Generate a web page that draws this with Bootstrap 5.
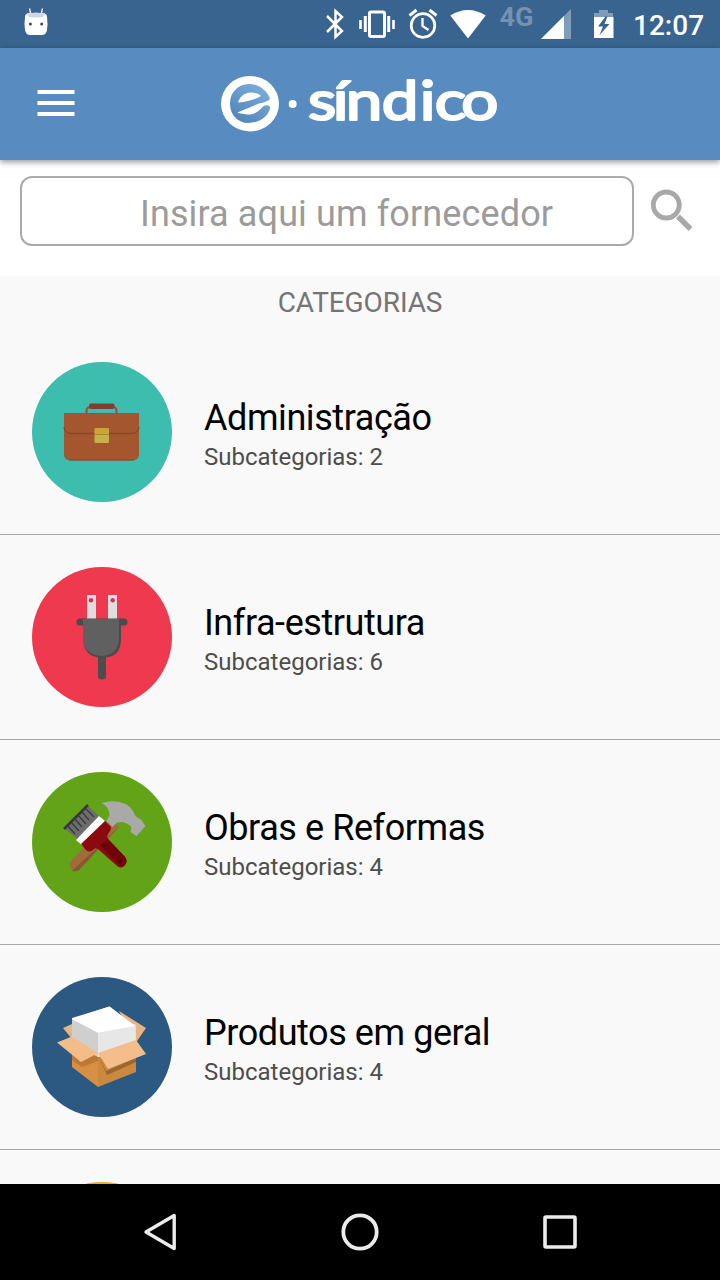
<!DOCTYPE html>
<html lang="pt-BR">
<head>
<meta charset="utf-8">
<meta name="viewport" content="width=device-width, initial-scale=1">
<title>e-síndico</title>
<link href="https://cdn.jsdelivr.net/npm/bootstrap@5.3.0/dist/css/bootstrap.min.css" rel="stylesheet">
<style>
  body { font-family: Roboto, sans-serif; background: #f9f9f9; height: 1280px; overflow: hidden; }
  svg { display: block; flex: none; }
  .status { height: 48px; background: #38648f; padding: 0 16px 0 22px; }
  .status .clock { font-size: 28px; font-weight: 500; line-height: 48px; margin-left: 17px; padding-top: 2px; width: 71px; white-space: nowrap; }
  .appbar { height: 112px; background: #588bc0; box-shadow: 0 2px 6px rgba(0,0,0,.42); z-index: 2; padding-left: 37px; }
  .menu-btn { margin-right: 143px; }
  .search { height: 116px; padding: 16px 27px 0 20px; }
  .search .form-control { width: 614px; height: 70px; border: 2px solid #aaa; border-radius: 12px; padding: 6px 0 0 118px; font-size: 36px; line-height: 42px; letter-spacing: .12px; background: #fff; }
  .search .form-control::placeholder { color: #9b9b9b; opacity: 1; }
  .section-title { height: 54px; font-size: 28px; line-height: 33px; color: #757575; padding-top: 10px; letter-spacing: -.1px; }
  .category { padding: 32px 32px; gap: 32px; height: 205px; background: transparent; border: 0; border-bottom: 1px solid #a8a8a8; }
  .category h2 { font-size: 36px; line-height: 42px; font-weight: 400; color: #000; margin: 35px 0 4px; letter-spacing: -.43px; }
  .category p { font-size: 24px; line-height: 28px; color: #4d4d4d; margin: 0; }
  .softkeys { height: 96px; background: #000; gap: 160px; }
</style>
</head>
<body class="d-flex flex-column">
<div class="status d-flex align-items-start text-white flex-shrink-0">
  <svg width="28" height="48" viewBox="22 0 28 48"><path d="M29.500 8.500l1.500 6M42.500 8.500l-1.500 6" stroke="#fff" stroke-width="1.300"/><path d="M25 17q0-4 5-4h12q5 0 5 4 1 7 0 13-1 5-5 5H30q-4 0-5-5-1-6 0-13z" fill="#fff"/><path d="M27 14q9-3 18 0l-2 3q-7 1-14 0z" fill="#ccd8e3"/><circle cx="30.400" cy="24" r="1.500" fill="#4b4550"/><circle cx="41.700" cy="24" r="1.500" fill="#4b4550"/></svg>
  <div class="d-flex ms-auto">
    <svg width="28" height="48" viewBox="322 0 28 48" fill="none" stroke="#fff" stroke-width="2.500"><path d="M327 16l15 15-6.500 6V11l6.500 6-15 15"/></svg>
    <svg width="52" height="48" viewBox="350 0 52 48" fill="none" stroke="#fff"><rect x="369.500" y="12" width="15" height="24.500" rx="1.500" stroke-width="3"/><path d="M365.300 16v16M388.700 16v16" stroke-width="3"/><path d="M360.500 20v9M393.500 20v9" stroke-width="2.600"/></svg>
    <svg width="43" height="48" viewBox="402 0 43 48" fill="none" stroke="#fff"><circle cx="423" cy="25.500" r="11.800" stroke-width="2.700"/><path d="M422.500 18v8l6 4" stroke-width="2.300"/><path d="M409.500 15.500l7-5.500M436.500 15.500l-7-5.500" stroke-width="3"/></svg>
    <svg width="45" height="48" viewBox="445 0 45 48"><path d="M468 38.500L450.300 15.500Q468 4.500 485.700 15.500z" fill="#fff"/></svg>
    <svg width="48" height="48" viewBox="490 0 48 48"><text x="499.500" y="26" font-family="Roboto" font-weight="700" font-size="25" textLength="34" lengthAdjust="spacingAndGlyphs" fill="#7592b0">4G</text></svg>
    <svg width="40" height="48" viewBox="538 0 40 48"><path d="M571 9v30h-30z" fill="#7f9cb9"/><path d="M564 16v23h-23z" fill="#fff"/></svg>
    <svg width="38" height="48" viewBox="578 0 38 48"><path d="M594 17v-4h5v-3h9v3h5v4z" fill="#7f9cb9"/><path d="M594 17h19.500v21H594z" fill="#fff"/><path d="M605.500 16.500l-7.500 10h5l-3.500 8.500 10-11h-5l3-7.500z" fill="#38648f"/></svg>
  </div>
  <div class="clock">12:07</div>
</div>

<header class="appbar navbar-dark d-flex position-relative flex-shrink-0">
  <svg class="menu-btn" width="40" height="112" viewBox="37 48 40 112" fill="#fff"><path d="M37.500 90h37v4h-37zM37.500 101h37v4h-37zM37.500 112h37v4h-37z"/></svg>
  <svg width="285" height="112" viewBox="220 48 285 112" role="img" aria-label="e-síndico">
    <defs><linearGradient id="emblem" x1="0" y1="1" x2=".7" y2="0"><stop offset="0" stop-color="#4c80b5"/><stop offset="1" stop-color="#78acd9"/></linearGradient></defs>
    <ellipse cx="250" cy="103.700" rx="29" ry="27.700" fill="#fff"/>
    <path d="M270 98.500C266 89 258 84 249 84 238 84 230 92.500 230 103.500 230 115 238 123 248 123 259 123 268 117 270 108.500 271 105 265 104 262 107.500 257 113.500 251 115 247.500 114.500 243 114 240 113.500 237.500 112.500L259 103.500Q269 101.500 270 98.500z" fill="url(#emblem)"/>
    <path d="M238 102.500C240 96 245 92.500 251 92.500 256 92.500 259.500 94 261 96 256 99 248 101.500 238 102.500z" fill="#fff"/>
    <circle cx="292.700" cy="104" r="4" fill="#fff"/>
    <text transform="translate(308 119.500) scale(1.190 1)" x="0 20.800 31.800 62 94 106.500 128.800" y="0" font-family="Lato, sans-serif" font-weight="400" font-size="55" fill="#fff" stroke="#fff" stroke-width="2.200" stroke-linejoin="round">síndico</text>
  </svg>
</header>

<form class="search d-flex justify-content-between bg-white flex-shrink-0">
  <input class="form-control" type="text" placeholder="Insira aqui um fornecedor">
  <svg width="42" height="70" viewBox="651 176 42 70" fill="none" stroke="#a8a8a8"><circle cx="666.300" cy="205" r="13" stroke-width="4.800"/><path d="M678 216.500l12.500 12.500" stroke-width="5.400"/></svg>
</form>

<main class="flex-grow-1 overflow-hidden" style="min-height:0">
  <div class="section-title text-center">CATEGORIAS</div>
  <div class="list-group list-group-flush">
    <a class="category list-group-item d-flex">
      <svg width="140" height="140" viewBox="32 362 140 140"><circle cx="102" cy="432" r="70" fill="#3cbdad"/>
        <path d="M86.500 414v-3q0-4 4-4h22q4 0 4 4v3" fill="none" stroke="#965039" stroke-width="2"/><rect x="89" y="403.500" width="25.500" height="5.500" rx="2" fill="#7c3f32"/>
        <path d="M64 413h75v41q0 6.500-6.500 6.500h-62Q64 460.500 64 454z" fill="#a4572e"/><path d="M64 413.500h75" stroke="#b04d29"/><path d="M64 427q1 6.500 7 6.500h61q6 0 7-6.500" fill="none" stroke="#8b4329" stroke-width="1.300"/><path d="M69 460h65" stroke="#8b4933" stroke-width="1"/>
        <rect x="94.500" y="428" width="14.500" height="15" rx="1.500" fill="#c8b04c"/><path d="M95 428h13.500v5.500H95z" fill="#c9a536"/><path d="M95 434.500h14" stroke="#a48330"/></svg>
      <div><h2>Administração</h2><p>Subcategorias: 2</p></div>
    </a>
    <a class="category list-group-item d-flex">
      <svg width="140" height="140" viewBox="32 567 140 140"><circle cx="102" cy="637" r="70" fill="#ee394f"/>
        <path d="M87 595h9v25h-9zM108 595h9v25h-9z" fill="#dedede"/><circle cx="91" cy="600.300" r="2.200" fill="#c53b55"/><circle cx="112.700" cy="600.300" r="2.200" fill="#c53b55"/>
        <path d="M98 655h8v21q0 3.500-4 3.500t-4-3.500z" fill="#4a4e4d"/><path d="M79.500 618.500h45q3 0 3 3.500t-3 3.500H121v13q0 19-17 19h-3q-17 0-18-19v-13h-3.500q-3 0-3-3.500t3-3.500z" fill="#4a4b4b"/><path d="M83 619h36v20q-1 16-17 17-18-1-19-17z" fill="#606060"/></svg>
      <div><h2>Infra-estrutura</h2><p>Subcategorias: 6</p></div>
    </a>
    <a class="category list-group-item d-flex">
      <svg width="140" height="140" viewBox="32 772 140 140"><circle cx="102" cy="842" r="70" fill="#62a318"/>
        <path d="M111 820l8 7-40 43q-3 2-7-1-3-3-2-7z" fill="#a16b3c"/><path d="M119 827l-40 43q-3 2-7 1z" fill="#885833"/>
        <path d="M101.500 803q13-4 24 1 6 3 9 10 2 4 6 5l5 7-9 10-6-4 1-5q-8-7-15-4l-4 4-6-6q2-4 3-6 0-8-8-12z" fill="#a9a9a9"/>
        <path d="M88 806l13 12-21 23-16-13z" fill="#6d6d6d"/><path d="M64 829l24-24" stroke="#383838" stroke-width="2.500"/><path d="M67 825l8 9M71 822l8 9M74 818l8 9M78 815l8 9M81 811l8 9M85 808l9 9" stroke="#3b3b3b" stroke-width="1.300"/>
        <path d="M99 816l6 5-22 25-7-6z" fill="#fff"/>
        <path d="M105 821l5 5q2 2 0 5-4 5-2 8l17 18q3 4 0 8-4 5-9 0L98 849q-3-2-5 1-4 3-7 0l-5-6z" fill="#8c0910"/><path d="M108 839l17 18q3 4 0 8-2 3-5 1l-20-21z" fill="#720009"/><circle cx="120.500" cy="861.500" r="1.900" fill="#480005"/></svg>
      <div><h2>Obras e Reformas</h2><p>Subcategorias: 4</p></div>
    </a>
    <a class="category list-group-item d-flex">
      <svg width="140" height="140" viewBox="32 977 140 140"><circle cx="102" cy="1047" r="70" fill="#2b5981"/>
        <path d="M72 1024l-9 4 9 11zM119 1011l27 17-11 16z" fill="#e9b47f"/>
        <path d="M72 1045l26 8v34l-26-20z" fill="#d98f42"/><path d="M98 1053l38-8v27l-38 15z" fill="#c9893e"/><path d="M72 1053l8 9 18-8v7l-16 6-10-7z" fill="#bd7835"/><path d="M98 1055l8 16 30-13v4l-29 13z" fill="#9d6630"/>
        <path d="M72 1018l37.500-11.500 26 21v22L98 1057l-26-17z" fill="#f5f5f5"/><path d="M72 1019l26 14v24l-26-16z" fill="#cfcfd0"/><path d="M98 1033l37.500-9v21L98 1057z" fill="#e7e7e7"/><path d="M72 1019l37.500-12.500 26 19.500L98 1032.500z" fill="#fff"/>
        <path d="M72 1036.500l26 16.500-17 9-24-19.500z" fill="#f3bd8a"/><path d="M98 1053l38-13 10 14-38 15z" fill="#f5bd89"/></svg>
      <div><h2>Produtos em geral</h2><p>Subcategorias: 4</p></div>
    </a>
    <a class="category list-group-item d-flex"><svg width="140" height="140" viewBox="0 0 140 140"><circle cx="70" cy="70" r="70" fill="#eda63a"/></svg></a>
  </div>
</main>

<nav class="softkeys d-flex justify-content-center align-items-center flex-shrink-0">
  <svg width="40" height="40" viewBox="140 1212 40 40" fill="none" stroke="#ececec" stroke-width="3.400" stroke-linejoin="round"><path d="M174.200 1215.500v33L146 1232z"/></svg>
  <svg width="40" height="40" viewBox="340 1212 40 40" fill="none" stroke="#ececec" stroke-width="3.800"><circle cx="360" cy="1232" r="16.700"/></svg>
  <svg width="40" height="40" viewBox="540 1212 40 40" fill="none" stroke="#ececec" stroke-width="3.600"><rect x="545" y="1217" width="30" height="30" rx="1"/></svg>
</nav>
<script src="https://cdn.jsdelivr.net/npm/bootstrap@5.3.0/dist/js/bootstrap.bundle.min.js"></script>
</body>
</html>
